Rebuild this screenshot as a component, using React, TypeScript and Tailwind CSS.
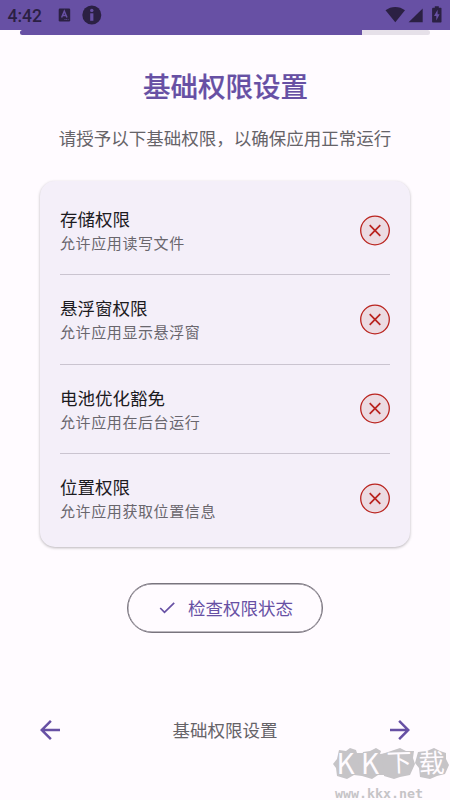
import React from "react"

const permissions = [
    { title: "存储权限", desc: "允许应用读写文件" },
    { title: "悬浮窗权限", desc: "允许应用显示悬浮窗" },
    { title: "电池优化豁免", desc: "允许应用在后台运行" },
    { title: "位置权限", desc: "允许应用获取位置信息" },
]

const StatusBar: React.FC = () => {
    return (
        <div className="h-[30px] bg-[#6750a4] flex items-center text-[#2b2043]">
            <span className="ml-[7.5px] w-[50.5px] font-['Roboto'] font-medium text-[17.5px] leading-none pt-[3px]">4:42</span>
            <svg width="13" height="14" viewBox="0 0 13 14" className="block">
                <rect x="0.7" y="0.5" width="11.5" height="13" rx="1.2" fill="currentColor" />
                <path d="M3.6 9.5 L6.3 3.2 L9 9.5 M4.5 7.4 H8" fill="none" stroke="#6750a4" strokeWidth="1.5" />
                <path d="M6.5 11.5 H10.5" stroke="#6750a4" strokeWidth="0.8" strokeDasharray="1 0.7" />
            </svg>
            <svg width="20" height="20" viewBox="0 0 20 20" className="block ml-[11px]">
                <circle cx="9.8" cy="10" r="9.5" fill="currentColor" />
                <circle cx="9.8" cy="5.4" r="1.7" fill="#6750a4" />
                <path d="M8.2 8.3 h3.2 v7.5 h-3.2 z" fill="#6750a4" />
            </svg>
            <svg width="65" height="20" viewBox="0 0 65 20" className="block ml-auto" fill="currentColor">
                <path d="M0.5 5.3 C6 0.8 14.5 0.8 20 5.3 L10.3 17.2 Z" />
                <path d="M37.7 3.5 V17.3 H23.6 Z" />
                <path d="M47.8 2.8 h2 v-1.6 h4 v1.6 h2 q0.7 0 0.7 0.7 v13.3 q0 0.7 -0.7 0.7 h-8 q-0.7 0 -0.7 -0.7 v-13.3 z" />
                <path d="M52.6 4.8 L49 11 H51.3 V15.6 L54.6 9.2 H52.6 Z" fill="#6750a4" />
            </svg>
        </div>
    )
}

const DeniedIcon: React.FC = () => {
    return (
        <svg width="30" height="31" viewBox="0 0 30 31" className="block">
            <circle cx="15" cy="15.5" r="14.3" fill="#ecdbe2" stroke="#b9231e" strokeWidth="1.3" />
            <path d="M9.7 10.2 L20.3 20.8 M20.3 10.2 L9.7 20.8" stroke="#b9231e" strokeWidth="1.7" />
        </svg>
    )
}

const Watermark: React.FC = () => {
    return (
        <svg width="120" height="58" viewBox="330 742 120 58" className="absolute left-[330px] top-[742px] overflow-visible">
            <g fill="#c6c4c7">
                <path d="M339 750 L346 751 L350 748 L356 750 L357 753 L366 753 L367 760 L365 766 L368 770 L362 776 L354 775 L347 779 L337 776 L336 768 L333 764 L337 759 Z" />
                <path d="M363 752 L370 751 L376 748 L381 751 L380 754 L390 753 L391 760 L389 766 L392 770 L386 775 L378 775 L372 779 L362 776 L361 768 L358 763 L361 758 Z" />
                <path d="M382 754 L391 751 L400 748 L406 751 L414 751 L413 758 L415 764 L410 775 L400 777 L394 779 L384 776 L383 765 Z" />
                <path d="M418 752 L427 751 L434 748 L440 751 L446 753 L446 759 L449 765 L445 774 L437 776 L430 779 L420 777 L419 768 L415 763 Z" />
            </g>
            <g fill="#fffbff" fontFamily="'Noto Sans CJK SC', sans-serif">
                <text transform="translate(336.5 774)" fontSize="28" fontWeight="400">K</text>
                <text transform="translate(361 774)" fontSize="28" fontWeight="400">K</text>
                <text transform="translate(387 772) rotate(-2)" fontSize="25" fontWeight="400">下</text>
                <text transform="translate(419 773) rotate(-2)" fontSize="26" fontWeight="400">载</text>
            </g>
            <text transform="translate(335 797.5) scale(1 0.87)" fontSize="13.3" fontWeight="700" fontFamily="'DejaVu Sans Mono', monospace" fill="#c6c4c7">www.kkx.net</text>
        </svg>
    )
}

const App: React.FC = () => {
    return (
        <div className="relative w-[450px] h-[800px] overflow-hidden bg-[#fffbff] flex flex-col font-['Noto_Sans_CJK_SC',sans-serif]">
            <StatusBar />
            <div className="mx-5 h-[5px] rounded-full bg-[#e6e0e9]">
                <div className="h-full w-[341.5px] rounded-l-full bg-[#6750a4]"></div>
            </div>

            <h1 className="mt-[30px] h-10 leading-[40px] pl-px text-center text-[27.5px] font-medium [-webkit-text-stroke:0.2px_#6750a4] text-[#6750a4]">基础权限设置</h1>
            <p className="mt-[21px] h-6 leading-[24px] text-center text-[17.5px] text-[#666368] whitespace-nowrap">请授予以下基础权限，以确保应用正常运行</p>

            <div className="mx-10 mt-[31px] h-[366px] px-5 rounded-[15px] bg-[#f4eff9] shadow-[0_1px_3px_rgba(0,0,0,0.28)] flex flex-col pt-[5px]">
                {permissions.map((item, index) => (
                    <div key={item.title} className={index < 3 ? "h-[89.4px] border-b border-[#cac4d0]" : "h-[88.4px]"}>
                        <div className="h-full flex items-center justify-between">
                            <div className="pb-[0.5px]">
                                <h3 className="h-[25px] leading-[25px] text-[17.5px] text-[#1c1b1f]">{item.title}</h3>
                                <p className="h-[23px] leading-[23px] text-[15px] tracking-[0.6px] text-[#69666d]">{item.desc}</p>
                            </div>
                            <DeniedIcon />
                        </div>
                    </div>
                ))}
            </div>

            <button className="mt-[35.5px] mx-auto w-[196px] h-[50px] shrink-0 rounded-full border border-[#79747e] shadow-[inset_0_0_0_0.4px_#79747e] flex items-center pl-[31px] text-[#6750a4]">
                <svg width="17" height="14" viewBox="0 0 17 14" className="block">
                    <path d="M1.2 7 L5.5 11.3 L15.2 1.8" fill="none" stroke="currentColor" strokeWidth="1.7" />
                </svg>
                <span className="ml-[12px] text-[17.5px] leading-[24px]">检查权限状态</span>
            </button>

            <div className="mt-[85.5px] mx-10 h-6 flex items-center justify-between text-[#6750a4]">
                <svg width="20" height="20" viewBox="4 4 16 16" fill="currentColor">
                    <path d="M20 11H7.83l5.59-5.59L12 4l-8 8 8 8 1.41-1.41L7.83 13H20v-2z" />
                </svg>
                <span className="text-[17.5px] text-[#666368]">基础权限设置</span>
                <svg width="20" height="20" viewBox="4 4 16 16" fill="currentColor">
                    <path d="M12 4l-1.41 1.41L16.17 11H4v2h12.17l-5.58 5.59L12 20l8-8z" />
                </svg>
            </div>
            <Watermark />
        </div>
    )
}

export default App
